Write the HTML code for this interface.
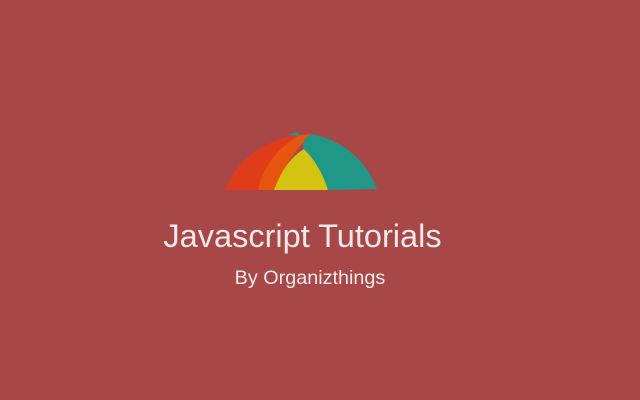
<!DOCTYPE html>
<html><head><style>
body{margin:0;width:640px;height:400px;background:#a84747;position:relative;overflow:hidden;font-family:"Liberation Sans",sans-serif;color:#f4eaea}
.t{position:absolute;left:0;width:605px;text-align:center;top:218px;font-size:32.5px}
.s{position:absolute;left:0;width:620px;text-align:center;top:267px;font-size:19.8px}
</style></head><body>
<svg width="640" height="400" style="position:absolute;left:0;top:0">
<path d="M225,190 Q240,150 290,136 L300,135 Q270,160 262,190 Z" fill="#e03c1a"/>
<path d="M258,190 Q265,155 300,135 L312,134 Q285,158 276,190 Z" fill="#e8550f"/>
<path d="M274,190 Q285,160 304,149 Q322,165 328,190 Z" fill="#d4c411"/>
<path d="M304,149 Q300,140 312,134 Q360,145 377,189 L328,190 Q320,165 304,149 Z" fill="#1f9888"/>
<path d="M288,135 L296,132 L302,136 Z" fill="#1f9888"/>
</svg>
<div class="t">Javascript Tutorials</div>
<div class="s">By Organizthings</div>
</body></html>
